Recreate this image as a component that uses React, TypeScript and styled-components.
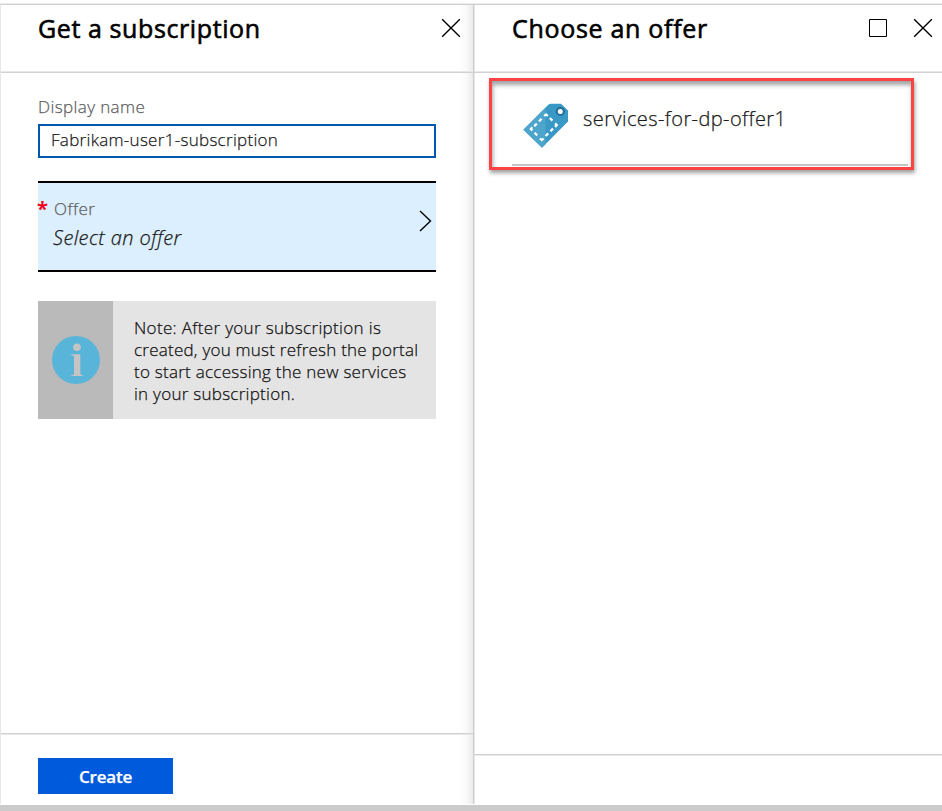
import React from "react";
import styled, { createGlobalStyle } from "styled-components";

const GlobalStyle = createGlobalStyle`
  * { box-sizing: border-box; }
  html, body, #root { margin: 0; height: 100%; }
  body { background: #fff; overflow: hidden; font-family: "Segoe UI", "Open Sans", "Noto Sans", sans-serif; font-weight: 300; -webkit-text-stroke: 0.25px; color: #000; }
`;

const Page = styled.div`
  width: 942px;
  height: 811px;
  padding-top: 3px;
  display: flex;
  flex-direction: column;
`;

const Blades = styled.div`
  flex: 1;
  min-height: 0;
  display: flex;
  padding-bottom: 1px;
  border-top: 1px solid #ededed;
`;

const BottomStrip = styled.div`
  height: 6px;
  background: #cbcbcb;
`;

const Blade = styled.section<{ $width: number }>`
  width: ${(p) => p.$width}px;
  display: flex;
  flex-direction: column;
  border-left: 1px solid #e6e6e6;
  border-top: 1px solid #cfcfcf;
`;

const SubscriptionBlade = styled(Blade)`
  background: linear-gradient(to left, #ebebeb, #f8f8f8 6px, #fff 13px);
`;

const OfferBlade = styled(Blade)`
  border-left: 1px solid #cdcdcd;
  box-shadow: inset 1px 0 0 #e9e9e9;
`;

const Header = styled.header<{ $right: number }>`
  height: 68px;
  display: flex;
  align-items: flex-start;
  padding: 5px ${(p) => p.$right}px 0 37px;
  border-bottom: 1px solid #d2d2d2;
  box-shadow: inset 0 -1px 0 #e8e8e8;
`;

const OfferHeader = styled(Header)`
  padding-left: 38px;
`;

const Title = styled.h1<{ $spacing: number }>`
  flex: 1;
  margin: 0;
  font-size: 25px;
  font-weight: 400;
  -webkit-text-stroke: 0.6px;
  line-height: 36px;
  letter-spacing: ${(p) => p.$spacing}px;
  white-space: nowrap;
`;

const HeaderActions = styled.div`
  display: flex;
  gap: 25px;
  padding-top: 8px;
`;

const Icon = styled.svg`
  display: block;
  flex: none;
`;

const Form = styled.div`
  flex: 1;
  padding: 22px 37px 0;
`;

const FieldLabel = styled.label<{ $spacing?: number }>`
  display: block;
  font-size: 17px;
  line-height: 24px;
  letter-spacing: ${(p) => p.$spacing ?? 0}px;
  color: #606060;
`;

const NameInput = styled.input`
  display: block;
  width: 398px;
  height: 34px;
  margin-top: 5px;
  padding: 0 11px 3px;
  border: 2px solid #0058ad;
  border-radius: 0;
  outline: 0;
  background: #fff;
  color: #1a1a1a;
  font: 300 17px "Segoe UI", "Open Sans", "Noto Sans", sans-serif;
  letter-spacing: 0.3px;
`;

const OfferPicker = styled.div`
  width: 398px;
  height: 91px;
  margin-top: 23px;
  display: flex;
  padding: 14px 4px 0 0;
  background: #dceffe;
  border-top: 2px solid #000;
  border-bottom: 2px solid #000;
`;

const Required = styled.span`
  width: 16px;
  margin: -2px 0 0 -1px;
  font-size: 20px;
  font-weight: 600;
  line-height: 28px;
  color: #f00018;
`;

const PickerText = styled.div`
  flex: 1;
  padding-left: 1px;
`;

const Placeholder = styled.div`
  margin: 2px 0 0 -1px;
  font-size: 20px;
  font-style: italic;
  line-height: 29px;
  letter-spacing: 0.4px;
  color: #1a1a1a;
`;

const Chevron = styled(Icon)`
  margin-top: 13px;
`;

const Note = styled.div`
  width: 398px;
  height: 118px;
  margin-top: 29px;
  display: flex;
  background: #e4e4e4;
`;

const NoteIcon = styled.div`
  width: 75px;
  display: flex;
  align-items: center;
  justify-content: center;
  background: #bababa;
`;

const NoteText = styled.div`
  padding: 16px 0 0 21px;
  font-size: 17px;
  line-height: 22px;
  color: #111;
`;

const NoteLine = styled.div<{ $spacing: number }>`
  white-space: nowrap;
  letter-spacing: ${(p) => p.$spacing}px;
`;

const Footer = styled.footer<{ $height: number }>`
  height: ${(p) => p.$height}px;
  padding: 24px 37px 0;
  border-top: 1px solid #d0d0d0;
  box-shadow: inset 0 1px 0 #e9e9e9;
`;

const CreateButton = styled.button`
  display: block;
  width: 135px;
  height: 36px;
  padding: 1px 0 0;
  border: 0;
  background: #005bdc;
  color: #fff;
  font: 600 17px "Segoe UI", "Open Sans", "Noto Sans", sans-serif;
  letter-spacing: -0.2px;
`;

const OfferList = styled.div`
  flex: 1;
  padding: 5px 0 0 15px;
`;

const OfferCard = styled.div`
  width: 425px;
  height: 92px;
  padding: 0 3px 0 20px;
  border: 3px solid #fb4245;
  box-shadow: 1px 3px 4px rgba(0, 0, 0, 0.38), inset 1px 4px 4px rgba(0, 0, 0, 0.36);
`;

const OfferRow = styled.div`
  height: 85px;
  display: flex;
  padding: 22px 0 0 11px;
  border-bottom: 2px solid #c5c5c5;
`;

const OfferName = styled.span`
  margin: 1px 0 0 14px;
  font-size: 20px;
  line-height: 30px;
  letter-spacing: 0.42px;
  color: #1a1a1a;
  white-space: nowrap;
`;

const CloseIcon = () => (
  <Icon width="20" height="20" viewBox="0 0 20 20" fill="none" stroke="#000" strokeWidth="1.4">
    <path d="M1.2 1.2 18.8 18.8M18.8 1.2 1.2 18.8" />
  </Icon>
);

const MaximizeIcon = () => (
  <Icon width="20" height="20" viewBox="0 0 20 20" fill="none" stroke="#000">
    <path d="M1.5 1.5h17v17h-17z" />
  </Icon>
);

const InfoIcon = () => (
  <Icon width="48" height="48" viewBox="0 0 48 48">
    <circle cx="24" cy="24" r="24" fill="#59b4d9" />
    <circle cx="25" cy="11.3" r="3.8" fill="#c4c4c4" />
    <path d="M19 18.3h9.3V37q0 2.2 2.7 2.5V40H19v-.5q3-.3 3-2.5V21.4q0-2-3-2.3z" fill="#c4c4c4" />
  </Icon>
);

const TagIcon = () => (
  <Icon width="46" height="46" viewBox="0 0 46 46">
    <path d="M0.3 26.8 25.6 1.5Q26.6.7 28 .7H38L45 7.5V18.4L19 44.7Z" fill="#3999c6" />
    <path d="M0.3 26.8 22.5 4.6V41.2L19 44.7Z" fill="#55a9cf" opacity=".7" />
    <circle cx="37.3" cy="8.4" r="3.6" fill="#fff" stroke="#28719a" strokeWidth="2.2" />
    <g fill="none" stroke="#fff" strokeWidth="2.2">
      <path d="M21.2 13 23 11.4l1.9 1.6M32.1 20.4 33.8 22l-1.7 1.9M20.6 35.5 18.8 37.1l-1.9-1.6M9.3 27.6 7.8 26l1.5-1.7" />
      <path d="M18.6 15.8 16 18.4M13.8 20.6 11.2 23.2M26.8 15 29.4 17.6M30 25.6l-2.6 2.6M25.2 30.4 22.6 33M11.6 29.8l2.6 2.6" />
    </g>
  </Icon>
);

const noteLines: [string, number][] = [
  ["Note: After your subscription is", 0.34],
  ["created, you must refresh the portal", 0.24],
  ["to start accessing the new services", 0.26],
  ["in your subscription.", 0.27],
];

export default function App() {
  return (
    <>
      <GlobalStyle />
      <Page>
        <Blades>
          <SubscriptionBlade $width={473}>
            <Header $right={12}>
              <Title $spacing={0.6}>Get a subscription</Title>
              <HeaderActions><CloseIcon /></HeaderActions>
            </Header>
            <Form>
              <FieldLabel htmlFor="name" $spacing={0.4}>Display name</FieldLabel>
              <NameInput id="name" defaultValue="Fabrikam-user1-subscription" />
              <OfferPicker>
                <Required>*</Required>
                <PickerText>
                  <FieldLabel as="div" $spacing={0.4}>Offer</FieldLabel>
                  <Placeholder>Select an offer</Placeholder>
                </PickerText>
                <Chevron width="14" height="22" viewBox="0 0 14 22" fill="none" stroke="#000" strokeWidth="1.4">
                  <path d="M2 1 12.5 11 2 21" />
                </Chevron>
              </OfferPicker>
              <Note>
                <NoteIcon><InfoIcon /></NoteIcon>
                <NoteText>
                  {noteLines.map(([text, spacing]) => (
                    <NoteLine key={text} $spacing={spacing}>{text}</NoteLine>
                  ))}
                </NoteText>
              </Note>
            </Form>
            <Footer $height={71}><CreateButton>Create</CreateButton></Footer>
          </SubscriptionBlade>
          <OfferBlade $width={469}>
            <OfferHeader $right={9}>
              <Title $spacing={0.7}>Choose an offer</Title>
              <HeaderActions><MaximizeIcon /><CloseIcon /></HeaderActions>
            </OfferHeader>
            <OfferList>
              <OfferCard>
                <OfferRow>
                  <TagIcon />
                  <OfferName>services-for-dp-offer1</OfferName>
                </OfferRow>
              </OfferCard>
            </OfferList>
            <Footer $height={50} />
          </OfferBlade>
        </Blades>
        <BottomStrip />
      </Page>
    </>
  );
}
